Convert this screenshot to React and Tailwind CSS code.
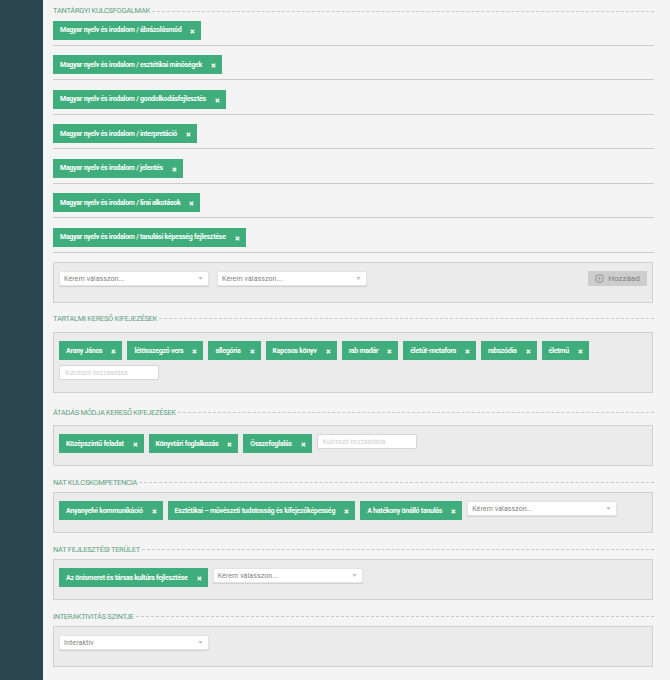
import { Plus } from 'lucide-react';

const concepts = [
  'Magyar nyelv és irodalom / ábrázolásmód',
  'Magyar nyelv és irodalom / esztétikai minőségek',
  'Magyar nyelv és irodalom / gondolkodásfejlesztés',
  'Magyar nyelv és irodalom / interpretáció',
  'Magyar nyelv és irodalom / jelentés',
  'Magyar nyelv és irodalom / lírai alkotások',
  'Magyar nyelv és irodalom / tanulási képesség fejlesztése',
];

const Pill = ({ label }) => (
  <span className="flex h-[19px] items-center justify-between gap-[7px] bg-[#3fae7c] pl-[7px] pr-[6px] text-[7px] font-bold text-white whitespace-nowrap">
    <span className="tracking-[-0.25px]">{label}</span>
    <svg width="5" height="5" viewBox="0 0 10 10" className="mt-[2px] ml-[2px] shrink-0">
      <path d="M1.5 1.5 L8.5 8.5 M8.5 1.5 L1.5 8.5" stroke="#f4f4f4" strokeWidth="3" />
    </svg>
  </span>
);

const Select = ({ label = 'Kérem válasszon...', className = 'w-[150px]' }) => (
  <div className={`flex h-[15px] items-center justify-between rounded-[2px] border border-[#e3e3e3] bg-white pl-[4px] pr-[5px] text-[7px] tracking-[0.1px] text-[#808080] shadow-[0_1px_1px_rgba(0,0,0,0.12)] ${className}`}>
    <span>{label}</span>
    <svg width="5" height="3" viewBox="0 0 6 4">
      <path d="M0 0 H6 L3 4 Z" fill="#c4c4c4" />
    </svg>
  </div>
);

const KeywordInput = () => (
  <input
    placeholder="Kulcsszó hozzáadása"
    className="h-[15px] w-[100px] rounded-[2px] border border-[#d6d6d6] bg-white px-[5px] text-[6.5px] placeholder:text-[#cfcfcf] outline-none"
  />
);

const Title = ({ children }) => (
  <div className="flex h-[12px] items-center gap-[2px]">
    <h2 className="text-[7.5px] font-normal uppercase tracking-[-0.3px] text-[#5f9f82] whitespace-nowrap">{children}</h2>
    <div className="flex-1 border-t border-dashed border-[#c9c9c9]" />
  </div>
);

const Box = ({ children, className = '' }) => (
  <div className={`min-h-[41px] w-[600px] border border-[#d0d0d0] bg-[#ebebeb] px-[5px] pt-[8px] ${className}`}>
    {children}
  </div>
);

const App = () => {
  return (
    <div className="flex h-[680px] w-[670px] overflow-hidden bg-[#f4f4f4] font-['Roboto',sans-serif]">
      <aside className="w-[43px] shrink-0 bg-[#2c4650]" />

      <main className="w-[601px] ml-[10px] pt-[5px]">
        <Title>Tantárgyi kulcsfogalmak</Title>

        <div className="mt-[3.9px]">
          {concepts.map((c) => (
            <div key={c} className="mb-[9.5px] border-b border-[#cbcbcb] pb-[5px]">
              <div className="flex">
                <Pill label={c} />
              </div>
            </div>
          ))}
        </div>

        <Box>
          <div className="flex items-start gap-[8px]">
            <Select />
            <Select />
            <button className="ml-auto flex h-[15px] w-[59px] items-center justify-center gap-[4px] bg-[#cdcdcd] text-[8px] text-[#808080]">
              <span className="flex h-[9px] w-[9px] items-center justify-center rounded-full border border-[#8f8f8f]">
                <Plus size={7} strokeWidth={1.5} color="#808080" />
              </span>
              Hozzáad
            </button>
          </div>
        </Box>

        <div className="mt-[9px]">
          <Title>Tartalmi kereső kifejezések</Title>
        </div>
        <Box className="mt-[8px] h-[61px]">
          <div className="flex flex-wrap gap-x-[5px] gap-y-[5px]">
            {['Arany János', 'létösszegző vers', 'allegória', 'Kapcsos könyv', 'rab madár', 'életút-metafora', 'rabszódia', 'életmű'].map((k) => (
              <Pill key={k} label={k} />
            ))}
            <KeywordInput />
          </div>
        </Box>

        <div className="mt-[13px]">
          <Title>Átadás módja kereső kifejezések</Title>
        </div>
        <Box className="mt-[7px]">
          <div className="flex items-start gap-[5px]">
            {['Középszintű feladat', 'Könyvtári foglalkozás', 'Összefoglalás'].map((k) => (
              <Pill key={k} label={k} />
            ))}
            <KeywordInput />
          </div>
        </Box>

        <div className="mt-[10px]">
          <Title>NAT kulcskompetencia</Title>
        </div>
        <Box className="mt-[4px]">
          <div className="flex items-start gap-[5px]">
            {['Anyanyelvi kommunikáció', 'Esztétikai – művészeti tudatosság és kifejezőképesség', 'A hatékony önálló tanulás'].map((k) => (
              <Pill key={k} label={k} />
            ))}
            <Select />
          </div>
        </Box>

        <div className="mt-[10px]">
          <Title>NAT fejlesztési terület</Title>
        </div>
        <Box className="mt-[4px]">
          <div className="flex items-start gap-[5px]">
            <Pill label="Az önismeret és társas kultúra fejlesztése" />
            <Select />
          </div>
        </Box>

        <div className="mt-[10px]">
          <Title>Interaktivitás szintje</Title>
        </div>
        <Box className="mt-[4px]">
          <Select label="Interaktív" />
        </Box>
      </main>
    </div>
  );
};

export default App;
